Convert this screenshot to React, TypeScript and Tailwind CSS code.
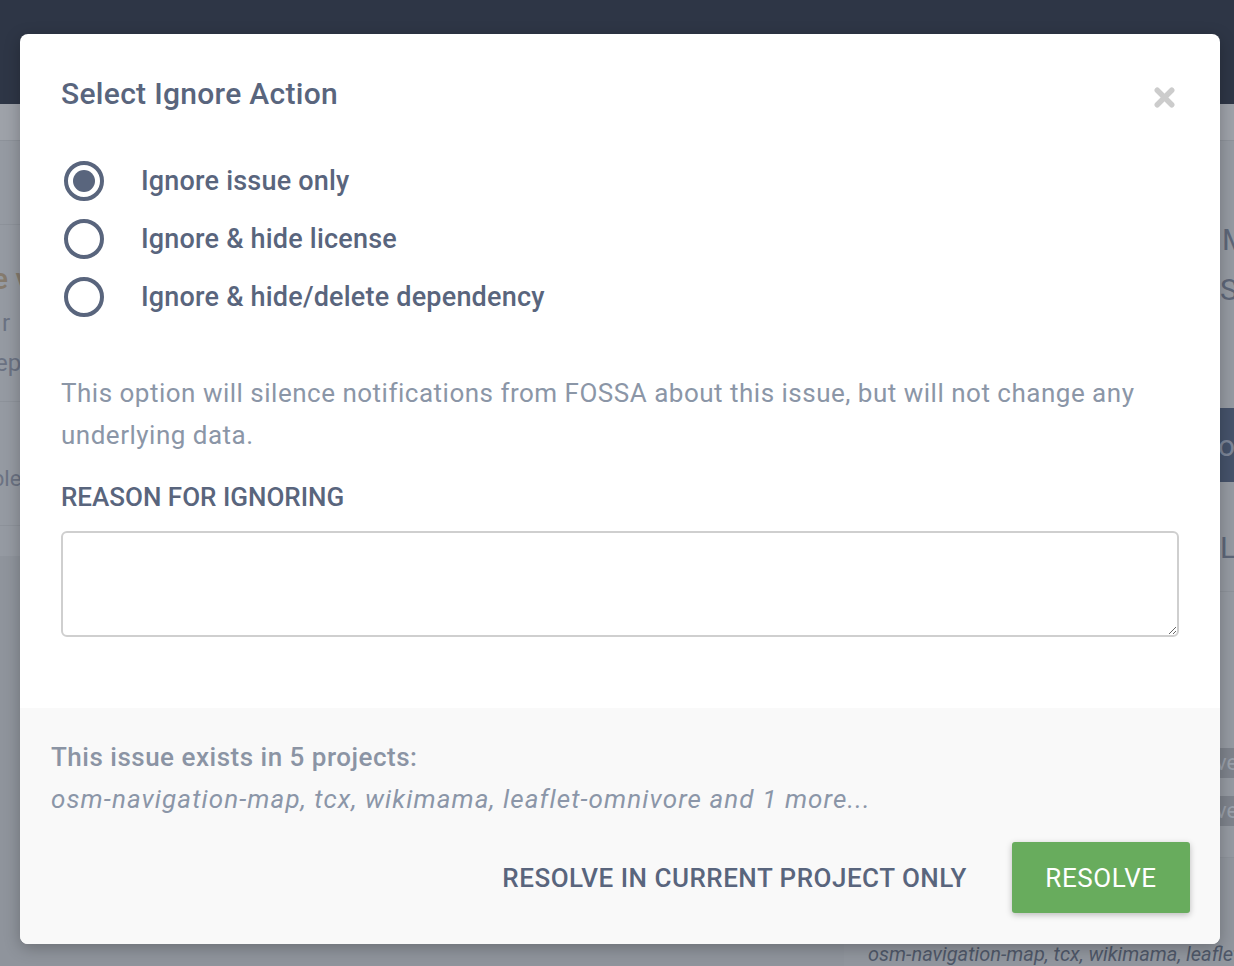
import { X } from 'lucide-react';

const font = { fontFamily: 'Roboto, "Noto Sans", sans-serif' };

const options = [
  { label: 'Ignore issue only', checked: true },
  { label: 'Ignore & hide license', checked: false },
  { label: 'Ignore & hide/delete dependency', checked: false },
];

// page behind the dimmed overlay (only its edges show)
function Backdrop() {
  return (
    <div className="h-[966px] w-[1234px] overflow-hidden bg-[#959aa2] whitespace-nowrap" style={font}>
      <div className="h-[104px] bg-[#2e3646]" />
      <div className="h-[37px] border-b border-[#8d929a] bg-[#9ea2a9]" />
      <div className="flex h-[825px]">
        {/* left column */}
        <div className="flex w-[844px] flex-col">
          <div className="h-[84px] border-b border-[#8d929a]" />
          <div className="flex flex-col pt-[34px]">
            <div className="-ml-[8px] text-[30px] font-medium leading-[40px] text-[#857b6e]">e v</div>
            <div className="mt-[4px] ml-[2px] text-[24px] leading-[40px] text-[#6b7282]">r</div>
            <div className="-ml-[5px] text-[24px] leading-[40px] text-[#6b7282]">ep</div>
          </div>
          <div className="mt-[18px] h-[125px] border-y border-[#8d929a] pt-[62px]">
            <div className="-ml-[8px] text-[22px] leading-[30px] text-[#6b7282]">ble</div>
          </div>
          <div className="h-[30px]" />
          <div className="flex-1 bg-[#8f949c]" />
        </div>
        {/* right column */}
        <div className="flex w-[390px] flex-col">
          <div className="mt-[81px] pl-[378px] text-[30px] leading-[36px] text-[#5d6678]">MV</div>
          <div className="mt-[14px] pl-[376px] text-[30px] leading-[36px] text-[#5d6678]">Se</div>
          <div className="mt-[100px] h-[76px] bg-[#45526a] pl-[374px] pt-[20px] text-[30px] leading-[36px] text-[#7c8597]">o c</div>
          <div className="h-[112px] border-b border-[#8d929a] pl-[376px] pt-[48px] text-[30px] leading-[36px] text-[#5d6678]">L</div>
          <div className="flex h-[270px] flex-col gap-[18px] border-b border-[#8d929a] pl-[360px] pt-[156px]">
            <div className="h-[30px] w-[80px] rounded-[3px] bg-[#7e838c] pl-[12px] text-[22px] leading-[30px] text-[#9aa0aa]">ve</div>
            <div className="h-[30px] w-[80px] rounded-[3px] bg-[#7e838c] pl-[12px] text-[22px] leading-[30px] text-[#9aa0aa]">ve</div>
          </div>
          <div className="flex-1 bg-[#91969e] pl-[24px] pt-[84px] text-[20px] italic leading-[24px] text-[#4f5869]">
            osm-navigation-map, tcx, wikimama, leaflet-omnivore
          </div>
        </div>
      </div>
    </div>
  );
}

function Radio({ checked }: { checked: boolean }) {
  return (
    <span className="flex h-[40px] w-[40px] shrink-0 items-center justify-center rounded-full border-[4px] border-[#59657d]">
      {checked && <span className="h-[22px] w-[22px] rounded-full bg-[#59657d]" />}
    </span>
  );
}

export default function App() {
  return (
    <div className="relative h-[966px] w-[1234px] overflow-hidden">
      <Backdrop />

      {/* Modal */}
      <div
        className="absolute left-[20px] top-[34px] flex h-[910px] w-[1200px] flex-col overflow-hidden rounded-[8px] bg-white shadow-[0_4px_16px_rgba(0,0,0,0.25)]"
        style={font}
      >
        <div className="flex flex-1 flex-col px-[41px] pt-[42px]">
          <div className="flex items-center justify-between">
            <h2 className="text-[30px] font-medium leading-[36px] tracking-[0.3px] text-[#59657d]">Select Ignore Action</h2>
            <button className="mt-[6px] text-[#cccccc]">
              <X className="h-[29px] w-[29px]" strokeWidth={4.5} />
            </button>
          </div>

          <div className="mt-[49px] flex flex-col gap-[18px] pl-[3px]">
            {options.map((o) => (
              <label key={o.label} className="flex items-center gap-[37px]">
                <Radio checked={o.checked} />
                <span className="text-[27px] font-medium leading-[40px] tracking-[0.2px] text-[#59657d]">{o.label}</span>
              </label>
            ))}
          </div>

          <p className="mt-[55px] text-[26px] leading-[42px] tracking-[0.5px] text-[#8b96a7]">
            This option will silence notifications from FOSSA about this issue, but will not change any underlying data.
          </p>

          <div className="mt-[26px] text-[26px] font-medium leading-[30px] text-[#59657d]">REASON FOR IGNORING</div>

          <textarea className="mt-[19px] h-[106px] w-full resize-y rounded-[6px] border-2 border-[#cfcfcf] bg-white" />
        </div>

        <div className="flex h-[236px] flex-col bg-[#f9f9f9] pl-[31px] pr-[30px] pt-[34px]">
          <div className="text-[26px] font-medium leading-[30px] tracking-[0.5px] text-[#8b94a4]">
            This issue exists in 5 projects:
          </div>
          <div className="mt-[12px] text-[26px] italic leading-[30px] tracking-[1.1px] text-[#8b96a8]">
            osm-navigation-map, tcx, wikimama, leaflet-omnivore and 1 more...
          </div>
          <div className="mt-[28px] flex items-center justify-end gap-[45px]">
            <button className="text-[26px] font-medium leading-[30px] tracking-[0.5px] text-[#59657d]">
              RESOLVE IN CURRENT PROJECT ONLY
            </button>
            <button className="h-[71px] w-[178px] rounded-[3px] bg-[#68ac5d] text-[26px] leading-[30px] tracking-[0.6px] text-white shadow-[0_2px_6px_rgba(0,0,0,0.25)]">
              RESOLVE
            </button>
          </div>
        </div>
      </div>
    </div>
  );
}
